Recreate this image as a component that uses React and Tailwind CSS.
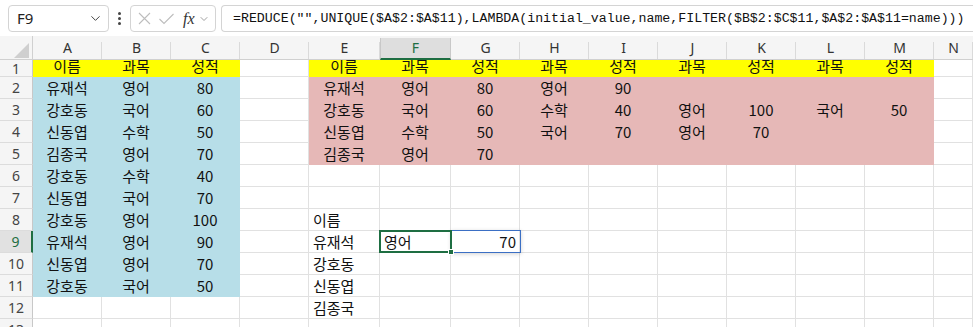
import { ChevronDown } from "lucide-react";

const COLS = ["A", "B", "C", "D", "E", "F", "G", "H", "I", "J", "K", "L", "M", "N"];
const COL_W = [
  "w-[69px]", "w-[69px]", "w-[69px]", "w-[69px]", "w-[71px]", "w-[71px]",
  "w-[69px]", "w-[69px]", "w-[69px]", "w-[69px]", "w-[69px]", "w-[69px]", "w-[69px]", "flex-1",
];
const ROWS = [1, 2, 3, 4, 5, 6, 7, 8, 9, 10, 11, 12, 13];

const data = {
  1: { A: "이름", B: "과목", C: "성적", E: "이름", F: "과목", G: "성적", H: "과목", I: "성적", J: "과목", K: "성적", L: "과목", M: "성적" },
  2: { A: "유재석", B: "영어", C: "80", E: "유재석", F: "영어", G: "80", H: "영어", I: "90" },
  3: { A: "강호동", B: "국어", C: "60", E: "강호동", F: "국어", G: "60", H: "수학", I: "40", J: "영어", K: "100", L: "국어", M: "50" },
  4: { A: "신동엽", B: "수학", C: "50", E: "신동엽", F: "수학", G: "50", H: "국어", I: "70", J: "영어", K: "70" },
  5: { A: "김종국", B: "영어", C: "70", E: "김종국", F: "영어", G: "70" },
  6: { A: "강호동", B: "수학", C: "40" },
  7: { A: "신동엽", B: "국어", C: "70" },
  8: { A: "강호동", B: "영어", C: "100", E: "이름" },
  9: { A: "유재석", B: "영어", C: "90", E: "유재석", F: "영어", G: "70" },
  10: { A: "신동엽", B: "영어", C: "70", E: "강호동" },
  11: { A: "강호동", B: "국어", C: "50", E: "신동엽" },
  12: { E: "김종국" },
};

const fill = (r, c) => {
  const i = COLS.indexOf(c);
  if (r === 1 && (i <= 2 || (i >= 4 && i <= 12))) return "bg-[#ffff00] border-[#ffff00]";
  if (r >= 2 && r <= 11 && i <= 2) return "bg-[#b7dee8] border-[#b7dee8]";
  if (r >= 2 && r <= 5 && i >= 4 && i <= 12) return "bg-[#e6b8b7] border-[#e6b8b7]";
  return "border-[#e1e1e1]";
};

const align = (r, c) => {
  if (r >= 8 && c === "E") return "justify-start pl-[4px]";
  if (r === 9 && c === "F") return "justify-start pl-[4px]";
  if (r === 9 && c === "G") return "justify-end pr-[3px]";
  return "justify-center";
};

const Cell = ({ r, c, w }) => {
  const v = data[r]?.[c];
  return (
    <div className={`relative ${w} shrink-0 h-full border-r border-b ${fill(r, c)}`}>
      <div className={`w-full h-full flex items-end overflow-hidden ${align(r, c)}`}>
        {v && <span className="leading-[21px] text-[15px] text-[#111] whitespace-nowrap">{v}</span>}
      </div>
      {r === 9 && c === "F" && (
        <div className="absolute z-20 -left-px -top-px w-[73px] h-[23px] border-2 border-[#1e6e42]">
          <div className="absolute -right-[4px] -bottom-[4px] w-[6px] h-[6px] bg-[#1e6e42] border border-white" />
        </div>
      )}
      {r === 9 && c === "G" && (
        <div className="absolute z-10 left-0 -top-px w-[70px] h-[23px] border border-[#3b6fc4] shadow-[0_1px_4px_rgba(0,0,0,0.18)]" />
      )}
    </div>
  );
};

const Toolbar = () => (
  <div className="h-[36px] flex items-start pt-[5px] pl-[8px] bg-white">
    <div className="w-[101px] h-[27px] border border-[#d4d4d4] rounded-[4px] flex items-center justify-between pl-[8px] pr-[5px]">
      <span className="text-[15px] text-[#222] font-['Noto_Sans',sans-serif]">F9</span>
      <ChevronDown size={15} strokeWidth={1.6} className="text-[#444]" />
    </div>
    <div className="w-[21px] h-[27px] flex flex-col items-center justify-center gap-[2px]">
      <span className="w-[3px] h-[3px] rounded-full bg-[#444]" />
      <span className="w-[3px] h-[3px] rounded-full bg-[#444]" />
      <span className="w-[3px] h-[3px] rounded-full bg-[#444]" />
    </div>
    <div className="w-[86px] h-[27px] border border-[#d4d4d4] rounded-[4px] flex items-center pl-[6px] gap-[6px]">
      <svg width="15" height="15" viewBox="0 0 15 15" className="shrink-0">
        <path d="M2 2 L13 13 M13 2 L2 13" stroke="#bdbdbd" strokeWidth="1.1" fill="none" />
      </svg>
      <svg width="17" height="15" viewBox="0 0 17 15" className="shrink-0">
        <path d="M1.5 8 L6 12.5 L15.5 3" stroke="#bdbdbd" strokeWidth="1.1" fill="none" />
      </svg>
      <span className="ml-[2px] text-[16px] italic text-[#333] font-['Liberation_Serif',serif] leading-none">fx</span>
      <ChevronDown size={12} strokeWidth={1.6} className="text-[#888] -ml-[3px]" />
    </div>
    <div className="flex-1 ml-[5px] h-[27px] border border-[#d4d4d4] border-r-0 rounded-l-[4px] flex items-center pl-[11px] overflow-hidden">
      <span className="text-[13.25px] text-[#111] font-['Liberation_Mono',monospace] whitespace-nowrap">
        =REDUCE("",UNIQUE($A$2:$A$11),LAMBDA(initial_value,name,FILTER($B$2:$C$11,$A$2:$A$11=name)))
      </span>
    </div>
  </div>
);

const ColumnHeader = () => (
  <div className="h-[24px] flex bg-[#f5f5f5] border-b border-[#d0d0d0]">
    <div className="w-[33px] shrink-0 relative border-r border-[#d0d0d0] flex items-end justify-end pr-[3px] pb-[1px]">
      <svg width="15" height="15" viewBox="0 0 15 15">
        <path d="M15 0 L15 15 L0 15 Z" fill="#cfcfcf" />
      </svg>
    </div>
    {COLS.map((c, i) => {
      const sel = c === "F";
      return (
        <div key={c} className={`relative ${COL_W[i]} shrink-0 flex items-center justify-center text-[14px] font-['Noto_Sans',sans-serif] ${sel ? "text-[#1e6e42]" : "text-[#333]"}`}>
          {sel && <div className="absolute left-0 right-0 top-[2px] -bottom-px bg-[#dedede] border-x border-[#c8c8c8] border-b-2 border-b-[#1e6e42]" />}
          <span className="relative">{c}</span>
          {!sel && <span className="absolute right-0 top-[6px] bottom-0 w-px bg-[#dadada]" />}
        </div>
      );
    })}
  </div>
);

export default function App() {
  return (
    <div className="w-[973px] h-[327px] overflow-hidden bg-white font-['Noto_Sans_CJK_KR',sans-serif]">
      <Toolbar />
      <ColumnHeader />
      {ROWS.map((r) => (
        <div key={r} className={`flex ${r === 1 ? "h-[17px]" : "h-[22px]"}`}>
          <div
            className={`w-[33px] shrink-0 h-full flex items-center justify-center text-[14px] font-['Noto_Sans',sans-serif] border-b border-[#dcdcdc] ${
              r === 9
                ? "bg-[#e1e1e1] text-[#1e6e42] border-r-2 border-r-[#1e6e42]"
                : "bg-[#f5f5f5] text-[#444] border-r border-r-[#c8c8c8]"
            }`}
          >
            {r}
          </div>
          {COLS.map((c, i) => (
            <Cell key={c} r={r} c={c} w={COL_W[i]} />
          ))}
        </div>
      ))}
    </div>
  );
}
